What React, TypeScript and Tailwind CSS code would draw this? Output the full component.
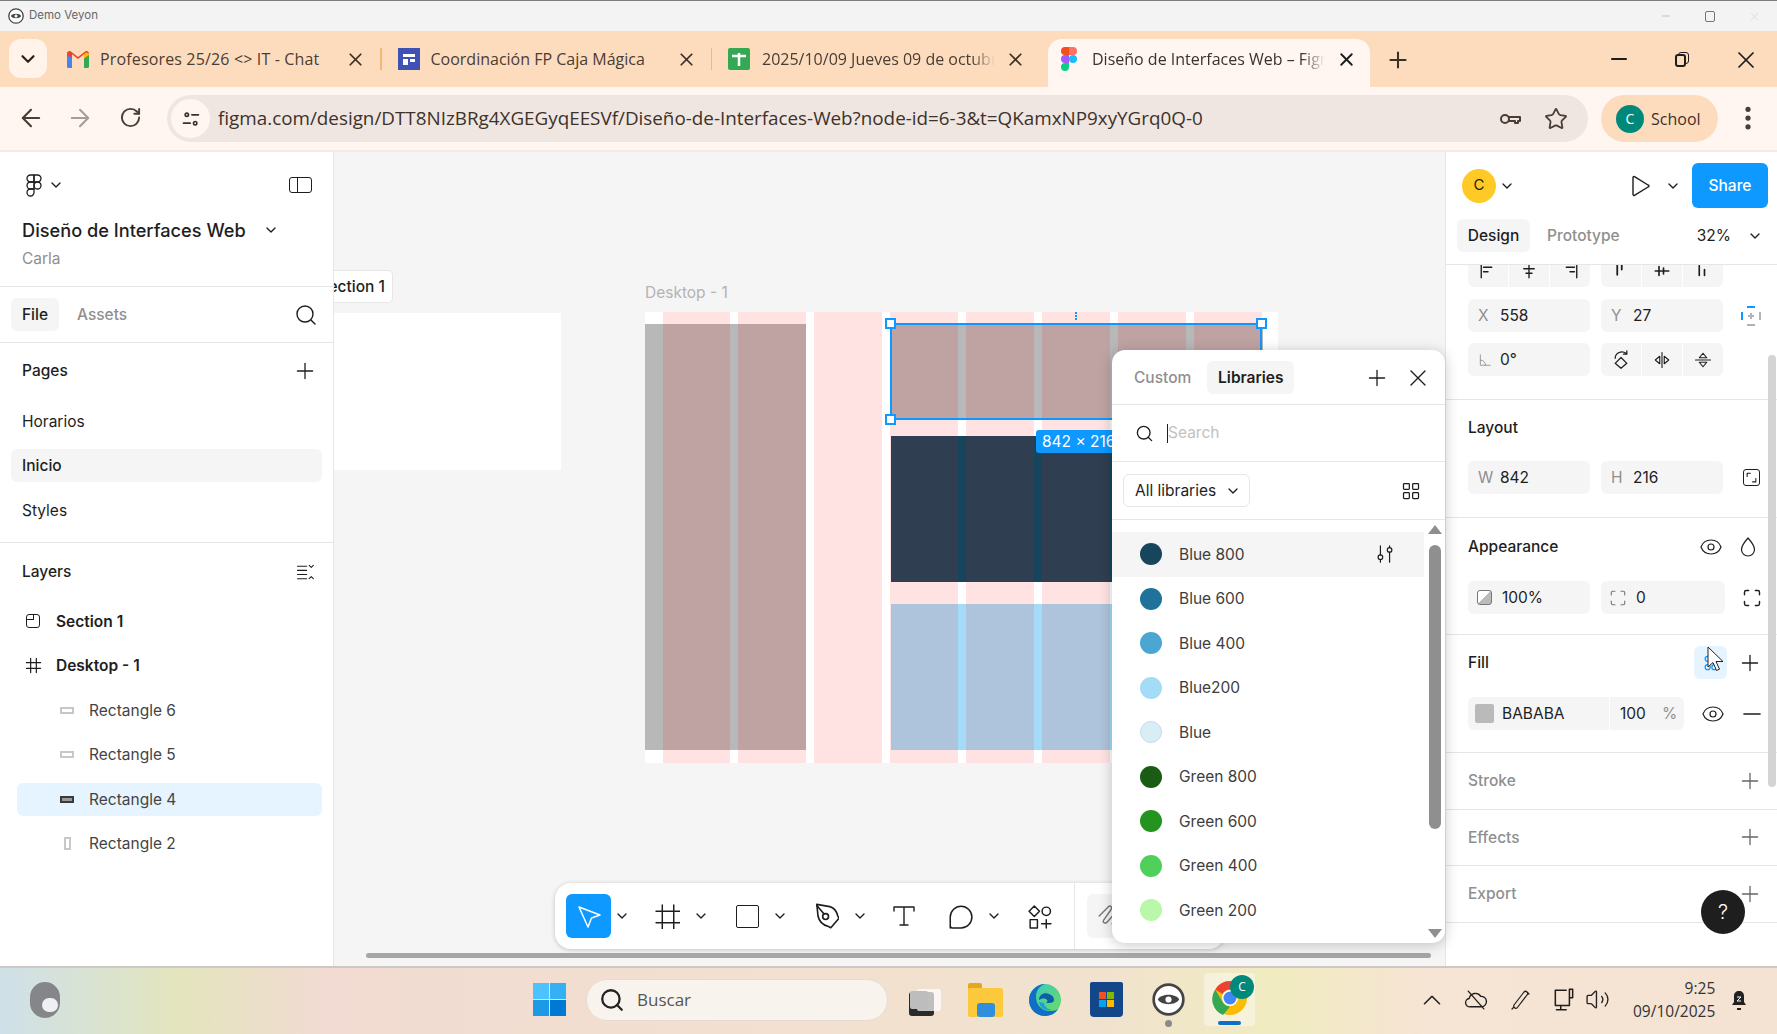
import React from "react";
import {
  ArrowLeft,
  ArrowRight,
  ChevronDown,
  ChevronUp,
  EllipsisVertical,
  Eye,
  Minus,
  Plus,
  RotateCw,
  Search,
  Star,
  Volume2,
  X,
} from "lucide-react";

const ink = "#1e1e1e";

const Stroke: React.FC<React.PropsWithChildren<{ size: number; view?: number; width?: number; color?: string }>> = ({
  size,
  view = 24,
  width = 1.5,
  color = ink,
  children,
}) => (
  <svg width={size} height={size} viewBox={`0 0 ${view} ${view}`} fill="none" stroke={color} strokeWidth={width} strokeLinecap="round" strokeLinejoin="round">
    {children}
  </svg>
);

// 16px chevron that takes 13px of room in the row
const Caret = () => (
  <div className="flex w-[13px] justify-center">
    <ChevronDown size={16} strokeWidth={2} color={ink} className="shrink-0" />
  </div>
);

const PanelPlus = ({ color = ink }: { color?: string }) => <Plus size={26} strokeWidth={1.200} color={color} className="-m-[3.500px]" />;

const PanelEye = () => <Eye size={24} strokeWidth={1.200} color={ink} className="-m-[1.500px]" />;

const TabClose = () => <X size={21} strokeWidth={2} color="#3a2f26" className="-m-[2px]" />;

const GmailIcon = () => (
  <svg width="22" height="17" viewBox="0 0 22 17">
    <path d="M0 3v12.5A1.5 1.5 0 0 0 1.500 17H5V7z" fill="#4285f4" />
    <path d="M22 3v12.500a1.500 1.500 0 0 1-1.500 1.500H17V7z" fill="#34a853" />
    <path d="M0 2.500C0 .5 2.300-.6 3.900.6L11 6l7.100-5.400C19.700-.6 22 .5 22 2.500V4l-5 3.500V3.200L11 8 5 3.200v4.300L0 4z" fill="#ea4335" />
    <path d="M17 3.200 19 1.600 22 2.500V4l-5 3.500z" fill="#fbbc04" />
  </svg>
);

const DocsIcon = () => (
  <div className="flex h-[22px] w-[22px] flex-col items-center justify-center bg-[#3f51b5]">
    <div className="h-[3px] w-[12px] bg-white" />
    <div className="mt-[2px] flex w-[12px] gap-[2px]">
      <div className="h-[6px] w-[5px] bg-white" />
      <div className="h-[3px] w-[5px] bg-white" />
    </div>
  </div>
);

const SheetsIcon = () => (
  <svg width="22" height="22" viewBox="0 0 22 22">
    <rect width="22" height="22" rx="2" fill="#34a853" />
    <path d="M4 8h14M11 5v13" stroke="#fff" strokeWidth="2.500" />
  </svg>
);

const FigmaColor = () => (
  <svg width="16" height="24" viewBox="0 0 16 24">
    <path d="M0 4a4 4 0 0 1 4-4h4v8H4a4 4 0 0 1-4-4z" fill="#f24e1e" />
    <path d="M8 0h4a4 4 0 0 1 0 8H8z" fill="#ff7262" />
    <path d="M0 12a4 4 0 0 1 4-4h4v8H4a4 4 0 0 1-4-4z" fill="#a259ff" />
    <circle cx="12" cy="12" r="4" fill="#1abcfe" />
    <path d="M0 20a4 4 0 0 1 4-4h4v4a4 4 0 0 1-8 0z" fill="#0acf83" />
  </svg>
);

const FigmaOutline = () => (
  <Stroke size={24} width={1.300}>
    <path d="M12 2H8.500a3.500 3.500 0 0 0 0 7H12z" />
    <path d="M12 2h3.500a3.500 3.500 0 0 1 0 7H12z" />
    <path d="M12 9H8.500a3.500 3.500 0 0 0 0 7H12z" />
    <circle cx="15.500" cy="12.500" r="3.500" />
    <path d="M12 16H8.500a3.500 3.500 0 1 0 3.500 3.500z" />
  </Stroke>
);

const VeyonEye = ({ size = 16 }: { size?: number }) => (
  <svg width={size} height={size} viewBox="0 0 16 16">
    <circle cx="8" cy="8" r="7.200" fill="#fff" stroke="#444" strokeWidth="1.300" />
    <path d="M2.800 8C4.500 5 11.500 5 13.200 8 11.500 11 4.500 11 2.800 8z" fill="#444" />
    <circle cx="8" cy="8" r="1.500" fill="#fff" />
  </svg>
);

const RectGlyph = ({ active, tall }: { active?: boolean; tall?: boolean }) => (
  <div className={`border-2 ${active ? "border-[#3a3a3a] bg-[#9a9a9a]" : "border-[#c8c8c8] bg-white"} ${tall ? "h-[13px] w-[7px]" : "h-[7px] w-[14px]"}`} />
);

const FieldBox: React.FC<React.PropsWithChildren<{ className?: string }>> = ({ className = "", children }) => (
  <div className={`flex h-[33px] items-center rounded-[6px] bg-[#f5f5f5] text-[15.500px] text-[#1e1e1e] ${className}`}>{children}</div>
);

const Field = ({ label, value }: { label: string; value: string }) => (
  <FieldBox className="w-[122px]">
    <span className="ml-[10px] w-[21px] text-[#8f8f8f]">{label}</span>
    <span className="ml-[1px]">{value}</span>
  </FieldBox>
);

const SegGroup: React.FC<{ items: React.ReactNode[]; className?: string }> = ({ items, className = "" }) => (
  <div className={`flex h-[33px] w-[122px] rounded-[6px] bg-[#f5f5f5] ${className}`}>
    {items.map((item, i) => (
      <div key={i} className={`flex flex-1 items-center justify-center ${i > 0 ? "border-l border-white" : ""}`}>
        {item}
      </div>
    ))}
  </div>
);

const PanelSection: React.FC<React.PropsWithChildren<{ className?: string }>> = ({ className = "", children }) => (
  <div className={`border-b border-[#e6e6e6] pl-[22px] ${className}`}>{children}</div>
);

const CollapsedSection = ({ label }: { label: string }) => (
  <PanelSection className="flex h-[56.500px] items-center justify-between pr-[18px]">
    <span className="text-[15.500px] font-medium text-[#8f8f8f]">{label}</span>
    <PanelPlus color="#666" />
  </PanelSection>
);

const TitleBar = () => (
  <div className="flex h-[31px] items-center border-t border-[#7b7f80] bg-[#f3f3f3] pl-[8px] text-[#666]">
    <VeyonEye />
    <span className="ml-[5px] text-[11.500px]">Demo Veyon</span>
    <div className="ml-auto mr-[16px] flex items-center gap-[33px] text-[#888]">
      <Minus size={12} strokeWidth={1} />
      <div className="h-[11px] w-[10px] rounded-[2px] border border-[#777]" />
      <X size={13} strokeWidth={1} color="#ccc" />
    </div>
  </div>
);

const TabStrip = () => (
  <div className="relative flex h-[56px] bg-[#fddcbe] font-['Open_Sans',sans-serif]">
    <div className="ml-[9px] mt-[8px] flex h-[39px] w-[38px] items-center justify-center rounded-[12px] bg-[#fff3ea]">
      <ChevronDown size={22} strokeWidth={2.400} color="#2a2118" />
    </div>
    <div className="ml-[20px] mt-[20px] flex h-[17px] w-[22px]"><GmailIcon /></div>
    <div className="ml-[11px] mt-[12px] w-[222px] truncate text-[16px] leading-[33px] tracking-[0.15px] text-[#4a3d33]">Profesores 25/26 &lt;&gt; IT - Chat</div>
    <div className="ml-[25px] mt-[20px]"><TabClose /></div>
    <div className="ml-[16px] mt-[17px] h-[22px] w-[1.500px] bg-[#f2b878]" />
    <div className="ml-[16px] mt-[17px]"><DocsIcon /></div>
    <div className="ml-[11px] mt-[12px] w-[216px] truncate text-[16px] leading-[33px] text-[#4a3d33]">Coordinación FP Caja Mágica</div>
    <div className="ml-[31px] mt-[20px]"><TabClose /></div>
    <div className="ml-[16px] mt-[17px] h-[22px] w-[1.500px] bg-[#f2b878]" />
    <div className="ml-[16px] mt-[17px]"><SheetsIcon /></div>
    <div className="ml-[12px] mt-[12px] w-[233px] overflow-hidden whitespace-nowrap text-[16px] leading-[33px] text-[#4a3d33] [mask-image:linear-gradient(90deg,#000_90%,transparent)]">2025/10/09 Jueves 09 de octubre</div>
    <div className="ml-[12px] mt-[20px]"><TabClose /></div>
    <div className="ml-[24px] mt-[8px] flex h-[48px] w-[322px] items-start rounded-t-[14px] bg-[#fff6f2] pt-[4px]">
      <div className="ml-[13px] mt-[4px]"><FigmaColor /></div>
      <div className="ml-[15px] w-[233px] overflow-hidden whitespace-nowrap text-[16px] leading-[33px] text-[#3d3229] [mask-image:linear-gradient(90deg,#000_90%,transparent)]">Diseño de Interfaces Web – Figma</div>
      <div className="ml-[13px] mt-[8px]"><X size={21} strokeWidth={2.200} color="#1e1e1e" className="-m-[2px]" /></div>
    </div>
    <div className="ml-[18px] mt-[19px]"><Plus size={26} strokeWidth={1.900} color="#3a2f26" className="-m-[3.500px]" /></div>
    <div className="ml-auto mr-[22px] mt-[19px] flex items-start gap-[47px] text-[#1e1e1e]">
      <Minus size={24} strokeWidth={2} className="-m-[3px]" />
      <div className="relative mt-[2px] h-[15px] w-[14px]">
        <div className="absolute left-[3px] top-0 h-[12px] w-[11px] rounded-[3px] border-[1.500px] border-[#1e1e1e]" />
        <div className="absolute bottom-0 left-0 h-[13px] w-[11px] rounded-[3px] border-[2px] border-[#1e1e1e] bg-[#fddcbe]" />
      </div>
      <X size={28} strokeWidth={1.500} className="-m-[4.500px]" />
    </div>
  </div>
);

const AddressBar = () => (
  <div className="flex h-[65px] items-start border-b-2 border-[#f6e9e1] bg-[#fff6f2] pt-[8px] font-['Open_Sans',sans-serif]">
    <div className="ml-[20px] mt-[12px]"><ArrowLeft size={28} strokeWidth={1.800} color="#4a3d33" className="-m-[3.500px]" /></div>
    <div className="ml-[28px] mt-[12px]"><ArrowRight size={28} strokeWidth={1.800} color="#a89d94" className="-m-[3.500px]" /></div>
    <div className="ml-[30px] mt-[12px]"><RotateCw size={23} strokeWidth={2} color="#4a3d33" className="-m-[1.500px]" /></div>
    <div className="ml-[27px] flex h-[47px] w-[1421px] items-center rounded-full bg-[#f0e6e1]">
      <div className="ml-[4px] flex h-[39px] w-[39px] items-center justify-center rounded-full bg-[#fff6f2]">
        <Stroke size={20} color="#3d3229" width={2}>
          <circle cx="7" cy="7" r="2" />
          <circle cx="17" cy="17" r="2" />
          <path d="M13 7h8M3 17h8" />
        </Stroke>
      </div>
      <span className="ml-[8px] whitespace-nowrap text-[18.840px] leading-none text-[#3d3229]">figma.com/design/DTT8NIzBRg4XGEGyqEESVf/Diseño-de-Interfaces-Web?node-id=6-3&amp;t=QKamxNP9xyYGrq0Q-0</span>
      <div className="ml-auto mr-[21px] flex items-center gap-[22px]">
        <Stroke size={24} color="#4a3d33" width={2}>
          <circle cx="7" cy="12" r="4" />
          <path d="M11 10h11v4h-2v2h-3v-2h-6" />
        </Stroke>
        <Star size={24} strokeWidth={1.800} color="#4a3d33" className="-m-[0.500px]" />
      </div>
    </div>
    <div className="ml-[13px] flex h-[47px] w-[117px] items-center rounded-full bg-[#fddcbe]">
      <div className="ml-[15px] flex h-[28px] w-[28px] items-center justify-center rounded-full bg-[#00897b] text-[14px] text-white">C</div>
      <span className="ml-[7px] text-[16px] text-[#3d3229]">School</span>
    </div>
    <div className="ml-[18px] mt-[11px]"><EllipsisVertical size={30} strokeWidth={2.200} color="#4a3d33" className="-m-[3px]" /></div>
  </div>
);

const LeftPanel = () => {
  const rowText = "text-[15.500px] text-[#1e1e1e]";
  return (
    <div className="flex w-[334px] shrink-0 flex-col border-r border-[#e6e6e6] bg-white">
      <div className="h-[135px] border-b border-[#e6e6e6] pl-[22px]">
        <div className="flex items-center pt-[21px]">
          <FigmaOutline />
          <div className="ml-[3px]"><Caret /></div>
          <div className="ml-auto mr-[21px] flex h-[16px] w-[23px] rounded-[3px] border-[1.500px] border-[#1e1e1e]">
            <div className="h-full w-[8px] border-r-[1.500px] border-[#1e1e1e]" />
          </div>
        </div>
        <div className="mt-[21px] flex items-center">
          <span className="text-[18.200px] font-medium leading-[24px] text-[#1e1e1e]">Diseño de Interfaces Web</span>
          <div className="ml-[19px]"><Caret /></div>
        </div>
        <div className="mt-[7px] text-[15.500px] leading-[20px] text-[#8f8f8f]">Carla</div>
      </div>
      <div className="flex h-[56px] items-center border-b border-[#e6e6e6] pl-[11px] pr-[17px]">
        <div className="flex h-[33px] w-[48px] items-center justify-center rounded-[6px] bg-[#f5f5f5] text-[15.500px] font-medium text-[#1e1e1e]">File</div>
        <span className="ml-[18px] text-[15.500px] font-medium text-[#8f8f8f]">Assets</span>
        <div className="ml-auto"><Search size={24} strokeWidth={1.400} color={ink} className="-m-[1.500px]" /></div>
      </div>
      <div className="h-[200px] border-b border-[#e6e6e6]">
        <div className="flex h-[56px] items-center justify-between pl-[22px] pr-[19px]">
          <span className="text-[15.500px] font-medium text-[#1e1e1e]">Pages</span>
          <PanelPlus />
        </div>
        <div className={`flex h-[44.500px] items-center pl-[22px] ${rowText}`}>Horarios</div>
        <div className="flex h-[44.500px] items-center pl-[11px] pr-[11px]">
          <div className={`flex h-[33px] w-full items-center rounded-[6px] bg-[#f5f5f5] pl-[11px] font-medium ${rowText}`}>Inicio</div>
        </div>
        <div className={`flex h-[44.500px] items-center pl-[22px] ${rowText}`}>Styles</div>
      </div>
      <div className="flex h-[57px] items-center justify-between pl-[22px] pr-[18px]">
        <span className="text-[15.500px] font-medium text-[#1e1e1e]">Layers</span>
        <Stroke size={20} width={1.300}>
          <path d="M3 5h11M3 10h11M3 15h11M3 20h11M17 4l2.500 2.500L22 4M17 20l2.500-2.500L22 20" />
        </Stroke>
      </div>
      <div className={`-mt-px flex h-[44.500px] items-center pl-[26px] font-semibold ${rowText}`}>
        <div className="relative h-[14px] w-[14px] rounded-[3px] border-[1.500px] border-[#1e1e1e]">
          <div className="h-[5px] w-[7px] border-b-[1.500px] border-r-[1.500px] border-[#1e1e1e]" />
        </div>
        <span className="ml-[16px]">Section 1</span>
      </div>
      <div className={`flex h-[44.500px] items-center pl-[25px] font-semibold ${rowText}`}>
        <Stroke size={17} width={1.700}>
          <path d="M8 2v20M16 2v20M2 8h20M2 16h20" />
        </Stroke>
        <span className="ml-[14px]">Desktop - 1</span>
      </div>
      <div className={`flex h-[44.500px] items-center pl-[60px] ${rowText}`}>
        <RectGlyph /><span className="ml-[15px] text-[#444]">Rectangle 6</span>
      </div>
      <div className={`flex h-[44.500px] items-center pl-[60px] ${rowText}`}>
        <RectGlyph /><span className="ml-[15px] text-[#444]">Rectangle 5</span>
      </div>
      <div className="flex h-[44.500px] items-center pl-[17px] pr-[11px]">
        <div className={`flex h-[33px] w-full items-center rounded-[6px] bg-[#e5f4ff] pl-[43px] ${rowText}`}>
          <RectGlyph active /><span className="ml-[15px] text-[#444]">Rectangle 4</span>
        </div>
      </div>
      <div className={`flex h-[44.500px] items-center pl-[64px] ${rowText}`}>
        <RectGlyph tall /><span className="ml-[18px] text-[#444]">Rectangle 2</span>
      </div>
    </div>
  );
};

const CanvasFrame = () => (
  <div className="absolute left-[311px] top-[160px] h-[451px] w-[633px] bg-white">
    <div className="absolute left-0 top-[12px] h-[426px] w-[161px] bg-[#b8b8b8]" />
    <div className="absolute left-[245.500px] top-[12px] h-[95px] w-[372px] bg-[#b8b8b8]" />
    <div className="absolute left-[245.500px] top-[124px] h-[146px] w-[372px] bg-[#17465c]" />
    <div className="absolute left-[245.500px] top-[292px] h-[146px] w-[372px] bg-[#a4dcf8]" />
    <div className="absolute left-[17.500px] top-0 flex h-full gap-[8.200px]">
      {[0, 1, 2, 3, 4, 5, 6, 7].map((col) => (
        <div key={col} className="h-full w-[67.800px] bg-[rgba(255,0,0,0.11)]" />
      ))}
    </div>
    <div className="absolute left-[245px] top-[11px] h-[97px] w-[372px] border-2 border-[#0d99ff]" />
    <div className="absolute left-[240px] top-[6px] h-[11px] w-[11px] border-2 border-[#0d99ff] bg-white" />
    <div className="absolute left-[240px] top-[102px] h-[11px] w-[11px] border-2 border-[#0d99ff] bg-white" />
    <div className="absolute left-[611px] top-[6px] h-[11px] w-[11px] border-2 border-[#0d99ff] bg-white" />
    <div className="absolute left-[430px] top-0 h-[8px] border-l-2 border-dotted border-[#0d99ff]" />
    <div className="absolute left-[391px] top-[118px] flex h-[23px] w-[90px] items-center justify-start whitespace-nowrap rounded-[3px] bg-[#0d99ff] pl-[6px] text-[15.500px] text-white">842 × 216</div>
  </div>
);

const ToolButton: React.FC<React.PropsWithChildren<{ caret?: boolean; className?: string }>> = ({ caret, className = "", children }) => (
  <div className={`flex items-center ${className}`}>
    {children}
    {caret && <Caret />}
  </div>
);

const BottomToolbar = () => (
  <div className="absolute left-[221px] top-[731px] flex h-[66px] w-[670px] items-center rounded-[16px] bg-white pl-[11px] shadow-[0_1px_5px_rgba(0,0,0,0.2)]">
    <ToolButton caret className="gap-[4px]">
      <div className="flex h-[44px] w-[45px] items-center justify-center rounded-[6px] bg-[#0d99ff]">
        <svg width="26" height="26" viewBox="0 0 26 26" fill="none" stroke="#fff" strokeWidth="1.500" strokeLinejoin="round">
          <path d="M3 4 24 12l-8.500 3L12 24z" />
        </svg>
      </div>
    </ToolButton>
    <ToolButton caret className="ml-[26.500px] gap-[15px]">
      <Stroke size={25} width={1.400}>
        <path d="M7 1v23M18 1v23M1 7h23M1 18h23" />
      </Stroke>
    </ToolButton>
    <ToolButton caret className="ml-[28px] gap-[15px]">
      <div className="h-[23px] w-[23px] rounded-[2px] border-[1.500px] border-[#1e1e1e]" />
    </ToolButton>
    <ToolButton caret className="ml-[24.500px] gap-[14.500px]">
      <Stroke size={28} width={1.400}>
        <path d="M5 2 16 4c4 1 6 4 7 8l1 2-7 8-2-1c-4-1-8-4-9-9z" />
        <path d="M5 3l6 7" />
        <circle cx="12.500" cy="12.500" r="2.500" />
      </Stroke>
    </ToolButton>
    <ToolButton className="ml-[25.500px]">
      <Stroke size={24} width={1.400}>
        <path d="M2 7V3h20v4M12 3v18M8 21h8" />
      </Stroke>
    </ToolButton>
    <ToolButton caret className="ml-[31px] gap-[14.500px]">
      <Stroke size={26} width={1.400}>
        <path d="M3 23V13a10 10 0 1 1 10 10H5a2 2 0 0 1-2-2z" />
      </Stroke>
    </ToolButton>
    <ToolButton className="ml-[26px]">
      <Stroke size={25} width={1.400}>
        <path d="M7 2l5 5-5 5-5-5zM3 15h7v8H3zM14 19h9M18.500 15v8" />
        <circle cx="18.500" cy="7" r="4" />
      </Stroke>
    </ToolButton>
    <div className="ml-[22.500px] h-full w-px bg-[#e6e6e6]" />
    <div className="ml-[12px] flex h-[44px] w-[120px] items-center rounded-[6px] bg-[#f5f5f5] pl-[10px]">
      <Stroke size={26} color="#777" width={1.300}>
        <path d="M2 12 11 3c2-1 3 1 2 3L6 16c-1 2 1 3 3 2l8-9c2-1 3 1 2 3l-5 7 2 3" />
      </Stroke>
    </div>
  </div>
);

const swatches = [
  { name: "Blue 800", color: "bg-[#17465c]" },
  { name: "Blue 600", color: "bg-[#21729a]" },
  { name: "Blue 400", color: "bg-[#4ba6d1]" },
  { name: "Blue200", color: "bg-[#a4dcf8]" },
  { name: "Blue", color: "bg-[#d9edf7] border border-[#c6dde6]" },
  { name: "Green 800", color: "bg-[#1a5c14]" },
  { name: "Green 600", color: "bg-[#25931f]" },
  { name: "Green 400", color: "bg-[#4fd05a]" },
  { name: "Green 200", color: "bg-[#b8f8a8]" },
];

const LibraryPopup = () => (
  <div className="absolute left-[1112px] top-[198px] z-10 flex h-[593px] w-[333px] flex-col overflow-hidden rounded-[13px] bg-white shadow-[0_2px_14px_rgba(0,0,0,0.22)]">
    <div className="flex h-[55px] shrink-0 items-center border-b border-[#e6e6e6] pl-[22px] pr-[18px] pt-[1px]">
      <span className="text-[15.500px] font-medium text-[#8f8f8f]">Custom</span>
      <div className="ml-[16px] flex h-[33px] w-[87px] items-center justify-center rounded-[6px] bg-[#f5f5f5] text-[15.500px] font-semibold text-[#1e1e1e]">Libraries</div>
      <div className="ml-auto flex items-center gap-[22px]">
        <PanelPlus />
        <X size={28} strokeWidth={1.200} color={ink} className="-m-[4.500px]" />
      </div>
    </div>
    <div className="flex h-[57px] shrink-0 items-center border-b border-[#e6e6e6] pl-[24px]">
      <Search size={19} strokeWidth={1.700} color={ink} className="-m-[1.500px]" />
      <div className="ml-[15px] h-[19px] w-px bg-[#1e1e1e]" />
      <span className="text-[15.500px] text-[#c2c2c2]">Search</span>
    </div>
    <div className="flex h-[58px] shrink-0 items-center justify-between border-b border-[#e6e6e6] pl-[11px] pr-[24px]">
      <div className="flex h-[33px] w-[127px] items-center rounded-[6px] border border-[#e6e6e6] pl-[11px] text-[15.500px] text-[#1e1e1e]">
        All libraries
        <div className="ml-[10px]"><Caret /></div>
      </div>
      <Stroke size={20} width={1.500}>
        <rect x="3" y="3" width="7" height="7" rx="1" />
        <rect x="14" y="3" width="7" height="7" rx="1" />
        <rect x="3" y="14" width="7" height="7" rx="1" />
        <rect x="14" y="14" width="7" height="7" rx="1" />
      </Stroke>
    </div>
    <div className="relative flex-1 pt-[12px]">
      {swatches.map((s, i) => (
        <div key={s.name} className={`flex h-[44.500px] w-[312px] items-center pl-[28px] ${i === 0 ? "bg-[#f5f5f5]" : ""}`}>
          <div className={`h-[22px] w-[22px] rounded-full ${s.color}`} />
          <span className="ml-[17px] text-[15.500px] text-[#3d3d3d]">{s.name}</span>
          {i === 0 && (
            <div className="ml-auto mr-[28px]">
              <Stroke size={22} width={1.300}>
                <path d="M7 3v10M7 18v3M17 3v2M17 10v11" />
                <circle cx="7" cy="15.500" r="2.500" />
                <circle cx="17" cy="7.500" r="2.500" />
              </Stroke>
            </div>
          )}
        </div>
      ))}
      <div className="absolute right-[3px] top-[5px] h-0 w-0 border-x-[7px] border-b-[9px] border-x-transparent border-b-[#8f8f8f]" />
      <div className="absolute right-[4px] top-[25px] h-[284px] w-[12px] rounded-full bg-[#8f8f8f]" />
      <div className="absolute bottom-[5px] right-[3px] h-0 w-0 border-x-[7px] border-t-[9px] border-x-transparent border-t-[#8f8f8f]" />
    </div>
  </div>
);

const Canvas = () => (
  <div className="relative flex-1 overflow-hidden bg-[#f5f5f5]">
    <div className="absolute left-0 top-[161px] h-[157px] w-[227px] bg-white" />
    <div className="absolute left-0 top-[118px] flex h-[33px] w-[59px] items-center justify-end overflow-hidden whitespace-nowrap rounded-r-[5px] border border-l-0 border-[#e6e6e6] bg-white pr-[7px] text-[15.500px] font-medium text-[#1e1e1e]">
      Section 1
    </div>
    <div className="absolute left-[311px] top-[131px] text-[15.500px] leading-[20px] text-[#b3b3b3]">Desktop - 1</div>
    <CanvasFrame />
    <BottomToolbar />
    <div className="absolute left-[32px] top-[801px] h-[5px] w-[1065px] rounded-full bg-[#a6a6a6]" />
  </div>
);

const cornersPath = "M3 8V5a2 2 0 0 1 2-2h3M16 3h3a2 2 0 0 1 2 2v3M21 16v3a2 2 0 0 1-2 2h-3M8 21H5a2 2 0 0 1-2-2v-3";

const RightPanel = () => (
  <div className="relative flex w-[332px] shrink-0 flex-col overflow-hidden border-l border-[#e6e6e6] bg-white text-[#1e1e1e]">
    <div className="h-[113px] shrink-0 border-b border-[#e6e6e6] pl-[11px]">
      <div className="flex items-center pt-[11px]">
        <div className="ml-[5px] flex h-[34px] w-[34px] items-center justify-center rounded-full bg-[#ffc926] text-[15px]">C</div>
        <div className="ml-[4px]"><Caret /></div>
        <div className="ml-auto">
          <Stroke size={24} width={1.400}>
            <path d="M5 3.500v17a1 1 0 0 0 1.500.800L20 13a1 1 0 0 0 0-2L6.500 2.700A1 1 0 0 0 5 3.500z" />
          </Stroke>
        </div>
        <div className="ml-[14px]"><Caret /></div>
        <div className="ml-[13px] mr-[9px] flex h-[45px] w-[76px] items-center justify-center rounded-[6px] bg-[#0d99ff] text-[15.500px] font-medium text-white">Share</div>
      </div>
      <div className="mt-[11px] flex items-center">
        <div className="flex h-[33px] w-[73px] items-center justify-center rounded-[6px] bg-[#f5f5f5] text-[15.500px] font-medium">Design</div>
        <span className="ml-[17px] text-[15.500px] font-medium text-[#8f8f8f]">Prototype</span>
        <span className="ml-[77px] text-[15.500px]">32%</span>
        <div className="ml-auto mr-[16px]"><Caret /></div>
      </div>
    </div>

    <PanelSection className="h-[135px] shrink-0">
      <div className="flex h-[22px] gap-[11px] overflow-hidden">
        <div className="-mt-[11px]">
          <SegGroup items={[
            <Stroke key="a" size={18} width={1.800}><path d="M3 3v18M6 7h11M6 13h6" /></Stroke>,
            <Stroke key="b" size={18} width={1.800}><path d="M12 3v18M5 9h14M8 15h8" /></Stroke>,
            <Stroke key="c" size={18} width={1.800}><path d="M21 3v18M7 7h11M12 13h6" /></Stroke>,
          ]} />
        </div>
        <div className="-mt-[11px]">
          <SegGroup items={[
            <Stroke key="a" size={18} width={2.400}><path d="M7 3v14M13 3v7" /></Stroke>,
            <Stroke key="b" size={18} width={2.200}><path d="M3 12h18M8 6v12M14 8v8" /></Stroke>,
            <Stroke key="c" size={18} width={2.200}><path d="M7 5v13M14 10v8" /></Stroke>,
          ]} />
        </div>
      </div>
      <div className="mt-[12px] flex items-center gap-[11px]">
        <Field label="X" value="558" />
        <Field label="Y" value="27" />
        <div className="ml-[6px]">
          <svg width="22" height="22" viewBox="0 0 22 22" fill="none" strokeWidth="2">
            <path d="M7 2h8M2 7v8" stroke="#0d99ff" />
            <path d="M7 20h8M20 7v8M11 8v6M8 11h6" stroke="#b3b3b3" />
          </svg>
        </div>
      </div>
      <div className="mt-[11px] flex items-center gap-[11px]">
        <FieldBox className="w-[122px]">
          <span className="ml-[10px] w-[21px]">
            <Stroke size={14} color="#8f8f8f"><path d="M4 3v18h17M4 12c5 0 9 4 9 9" /></Stroke>
          </span>
          <span className="ml-[1px]">0°</span>
        </FieldBox>
        <SegGroup items={[
          <Stroke key="a" size={20}><path d="M12 9l7 7-7 6-7-6zM5 10a8 8 0 0 1 13-6M19 1v4h-4" /></Stroke>,
          <Stroke key="b" size={18}><path d="M12 2v20M9 7l-6 5 6 5zM15 7l6 5-6 5z" /></Stroke>,
          <Stroke key="c" size={18}><path d="M2 12h20M7 9l5-6 5 6zM7 15l5 6 5-6z" /></Stroke>,
        ]} />
      </div>
    </PanelSection>

    <PanelSection className="h-[118px] shrink-0">
      <div className="pt-[18px] text-[15.500px] font-medium leading-[20px]">Layout</div>
      <div className="mt-[23px] flex items-center gap-[11px]">
        <Field label="W" value="842" />
        <Field label="H" value="216" />
        <div className="ml-[9px] flex h-[17px] w-[17px] items-center justify-center rounded-[3px] border-[1.500px] border-[#1e1e1e]">
          <Stroke size={13} width={2}><path d="M4 10V4h6M14 20h6v-6" /></Stroke>
        </div>
      </div>
    </PanelSection>

    <PanelSection className="h-[117px] shrink-0">
      <div className="flex items-center justify-between pr-[17px] pt-[17px]">
        <span className="text-[15.500px] font-medium leading-[20px]">Appearance</span>
        <div className="flex items-center gap-[15px]">
          <PanelEye />
          <Stroke size={24} width={1.200}><path d="M12 3c4 4.500 6.500 8 6.500 11.500a6.500 6.500 0 0 1-13 0C5.500 11 8 7.500 12 3z" /></Stroke>
        </div>
      </div>
      <div className="mt-[22px] flex items-center gap-[11px]">
        <FieldBox className="w-[122px]">
          <div className="ml-[9px] mr-[10px] h-[15px] w-[15px] rounded-[3px] border border-[#777] bg-[linear-gradient(135deg,#fff_50%,#bbb_50%)]" />
          100%
        </FieldBox>
        <FieldBox className="w-[124px]">
          <div className="ml-[8px] mr-[9px]">
            <Stroke size={18} color="#777"><path d={cornersPath} /></Stroke>
          </div>
          0
        </FieldBox>
        <div className="ml-[6px]">
          <Stroke size={20} width={1.700}><path d={cornersPath} /></Stroke>
        </div>
      </div>
    </PanelSection>

    <PanelSection className="h-[118px] shrink-0">
      <div className="flex items-center pr-[18px] pt-[11px]">
        <span className="text-[15.500px] font-medium leading-[33px]">Fill</span>
        <div className="relative ml-auto flex h-[33px] w-[33px] items-center justify-center rounded-[6px] bg-[#e5f4ff]">
          <Stroke size={20} color="#0d99ff" width={1.500}>
            <circle cx="8" cy="7" r="3" /><circle cx="16" cy="7" r="3" /><circle cx="8" cy="17" r="3" /><circle cx="16" cy="17" r="3" />
          </Stroke>
          <svg className="absolute left-[12px] top-0" width="20" height="28" viewBox="0 0 20 28">
            <path d="M2 1v20l5-4.500 3.500 8 3-1.300-3.500-7.700 7 0z" fill="#fff" stroke="#222" strokeWidth="1" />
          </svg>
        </div>
        <div className="ml-[13px]"><PanelPlus /></div>
      </div>
      <div className="mt-[18px] flex items-center">
        <FieldBox className="w-[216px]">
          <div className="ml-[7px] h-[19px] w-[19px] rounded-[2px] bg-[#bababa]" />
          <span className="ml-[8px] w-[107px]">BABABA</span>
          <div className="h-full w-px bg-white" />
          <span className="ml-[10px]">100</span>
          <span className="ml-[16px] text-[#8f8f8f]">%</span>
        </FieldBox>
        <div className="ml-[18px]"><PanelEye /></div>
        <div className="ml-[19px]"><Minus size={28} strokeWidth={1.100} color={ink} className="-m-[4.500px]" /></div>
      </div>
    </PanelSection>

    <CollapsedSection label="Stroke" />
    <CollapsedSection label="Effects" />
    <CollapsedSection label="Export" />

    <div className="absolute bottom-[32px] right-[32px] flex h-[44px] w-[44px] items-center justify-center rounded-full bg-[#1e1e1e] text-[20px] font-light text-white">?</div>
    <div className="absolute right-[1px] top-[203px] h-[432px] w-[8px] rounded-full bg-[#d4d4d4]" />
  </div>
);

const EdgeIcon = () => (
  <svg width="34" height="34" viewBox="0 0 34 34">
    <defs>
      <linearGradient id="edgeA" x1="0" y1="0" x2="1" y2="1">
        <stop offset="0" stopColor="#36c9c4" />
        <stop offset="1" stopColor="#6fdc5d" />
      </linearGradient>
    </defs>
    <circle cx="17" cy="17" r="16" fill="url(#edgeA)" />
    <path d="M1 17C1 8 9 1 17 1c-8 3-9 9-9 13 0 8 6 15 16 14 2 0 4-1 6-2-3 5-8 7-13 7C8 33 1 26 1 17z" fill="#0f6fc6" />
    <path d="M11 17c0-5 5-8 10-6 3 1 5 3 5 6 0 2-2 3-5 3h-3c2-1 2-3 0-4-3-1-5 0-7 1z" fill="#0b5ea8" />
    <path d="M11 19c1 6 6 9 13 8-5-1-8-4-8-7z" fill="#1b9de2" />
  </svg>
);

const ChromeIcon = () => (
  <svg width="36" height="36" viewBox="0 0 36 36">
    <circle cx="18" cy="18" r="17" fill="#fbbc04" />
    <path d="M18 1a17 17 0 0 1 14.700 8.500H18A8.500 8.500 0 0 0 10.600 14L3.300 9.500A17 17 0 0 1 18 1z" fill="#ea4335" />
    <path d="M3.300 9.500 10.600 22A8.500 8.500 0 0 0 18 26.500L11 35A17 17 0 0 1 3.300 9.500z" fill="#34a853" />
    <circle cx="18" cy="18" r="8" fill="#fff" />
    <circle cx="18" cy="18" r="6.500" fill="#4285f4" />
  </svg>
);

const Taskbar = () => (
  <div className="flex h-[68px] items-center border-t-2 border-[#cfc8c2] bg-[linear-gradient(90deg,#cfe0e8_0%,#e3e5bd_10%,#f1dbd2_18%,#f3e0d0_45%,#f1e2cf_62%,#f0ecc0_72%,#f6e4d4_80%,#f4e2d2_100%)] pb-[3px] font-['Open_Sans',sans-serif] text-[#222]">
    <div className="relative ml-[30px] h-[36px] w-[30px] rounded-full bg-[#85868a]">
      <div className="absolute bottom-[6px] left-[12px] h-[14px] w-[16px] rounded-full bg-[#eef0f2]" />
    </div>
    <div className="ml-[473px] grid h-[33px] w-[33px] grid-cols-2 gap-[1px]">
      <div className="bg-[#4cc2ff]" />
      <div className="bg-[#35b0f5]" />
      <div className="bg-[#1d9ae6]" />
      <div className="bg-[#0078d4]" />
    </div>
    <div className="ml-[20px] flex h-[42px] w-[302px] items-center rounded-full border border-[#e5dcd3] bg-[#f9f3ed]">
      <div className="ml-[13px]"><Search size={26} strokeWidth={2.100} color="#222" className="-m-[1px]" /></div>
      <span className="ml-[13px] text-[17px] text-[#555]">Buscar</span>
    </div>
    <div className="relative ml-[21px] h-[32px] w-[34px]">
      <div className="absolute bottom-0 left-0 h-[24px] w-[25px] rounded-[3px] bg-[#2b2b2b]" />
      <div className="absolute bottom-[5px] left-[8px] h-[22px] w-[24px] rounded-[2px] bg-white/70" />
      <div className="absolute bottom-[7px] left-[1px] h-[18px] w-[18px] rounded-[2px] bg-[#bdbdbd]" />
    </div>
    <div className="relative ml-[25px] h-[34px] w-[35px]">
      <div className="absolute left-0 top-0 h-[10px] w-[14px] rounded-t-[2px] bg-[#e3a81e]" />
      <div className="absolute bottom-0 left-0 h-[29px] w-[35px] rounded-[2px] bg-[#fcc93d]" />
      <div className="absolute bottom-0 left-[9px] h-[14px] w-[18px] rounded-[3px] bg-[#2f8fdc]" />
    </div>
    <div className="ml-[25px]"><EdgeIcon /></div>
    <div className="ml-[28px] flex h-[35px] w-[33px] items-center justify-center rounded-b-[4px] rounded-t-[2px] bg-[#14468a]">
      <div className="grid h-[15px] w-[15px] grid-cols-2 gap-[1px]">
        <div className="bg-[#f25022]" />
        <div className="bg-[#7fba00]" />
        <div className="bg-[#00a4ef]" />
        <div className="bg-[#ffb900]" />
      </div>
    </div>
    <div className="relative ml-[29px]">
      <VeyonEye size={33} />
      <div className="absolute -bottom-[11px] left-[13px] h-[7px] w-[7px] rounded-full bg-[#8a8a8a]" />
    </div>
    <div className="relative ml-[19px] flex h-[53px] w-[51px] items-center justify-center rounded-[4px] bg-white/40">
      <div className="-mt-[4px]"><ChromeIcon /></div>
      <div className="absolute right-[1px] top-[2px] flex h-[24px] w-[24px] items-center justify-center rounded-full bg-[#00897b] text-[12px] text-white">C</div>
      <div className="absolute bottom-[1px] left-[14px] h-[4px] w-[23px] rounded-full bg-[#0f6fc6]" />
    </div>
    <div className="ml-[167px]"><ChevronUp size={30} strokeWidth={1.300} color="#222" className="-m-[5px]" /></div>
    <div className="ml-[21px]">
      <Stroke size={25} width={1.300}>
        <path d="M7 19a4 4 0 0 1-1-8 6 6 0 0 1 11-2 5 5 0 0 1 1 10zM5 4l15 17" />
      </Stroke>
    </div>
    <div className="ml-[20px]">
      <Stroke size={24} width={1.200}>
        <path d="M6 17 16 4c2-2 5 1 3 3L9 20c-2 1-4-1-3-3zM4 21l2-2M19 4l2 2" />
      </Stroke>
    </div>
    <div className="ml-[19px]">
      <Stroke size={26} width={1.400}>
        <path d="M14 3H4v14h13V10M9 17v4M5 21h9M17 2h3v8h-3z" />
      </Stroke>
    </div>
    <div className="ml-[8px]"><Volume2 size={25} strokeWidth={1.300} color="#222" /></div>
    <div className="ml-[23px] text-right text-[15.500px] leading-[23px] text-[#333]">
      <div>9:25</div>
      <div>09/10/2025</div>
    </div>
    <div className="ml-[15px]">
      <svg width="18" height="26" viewBox="0 0 18 26">
        <path d="M9 4c3 0 5 2 5 5v6l2 3H2l2-3V9c0-3 2-5 5-5z" fill="#222" />
        <path d="M7 22h4" stroke="#222" strokeWidth="2" />
        <path d="M7 10h4l-4 4h4" stroke="#fff" fill="none" />
      </svg>
    </div>
  </div>
);

export default function App() {
  return (
    <div className="flex h-[1034px] w-[1777px] flex-col overflow-hidden bg-white font-['Inter',sans-serif]">
      <TitleBar />
      <TabStrip />
      <AddressBar />
      <div className="relative flex h-[814px]">
        <LeftPanel />
        <Canvas />
        <LibraryPopup />
        <RightPanel />
      </div>
      <Taskbar />
    </div>
  );
}
